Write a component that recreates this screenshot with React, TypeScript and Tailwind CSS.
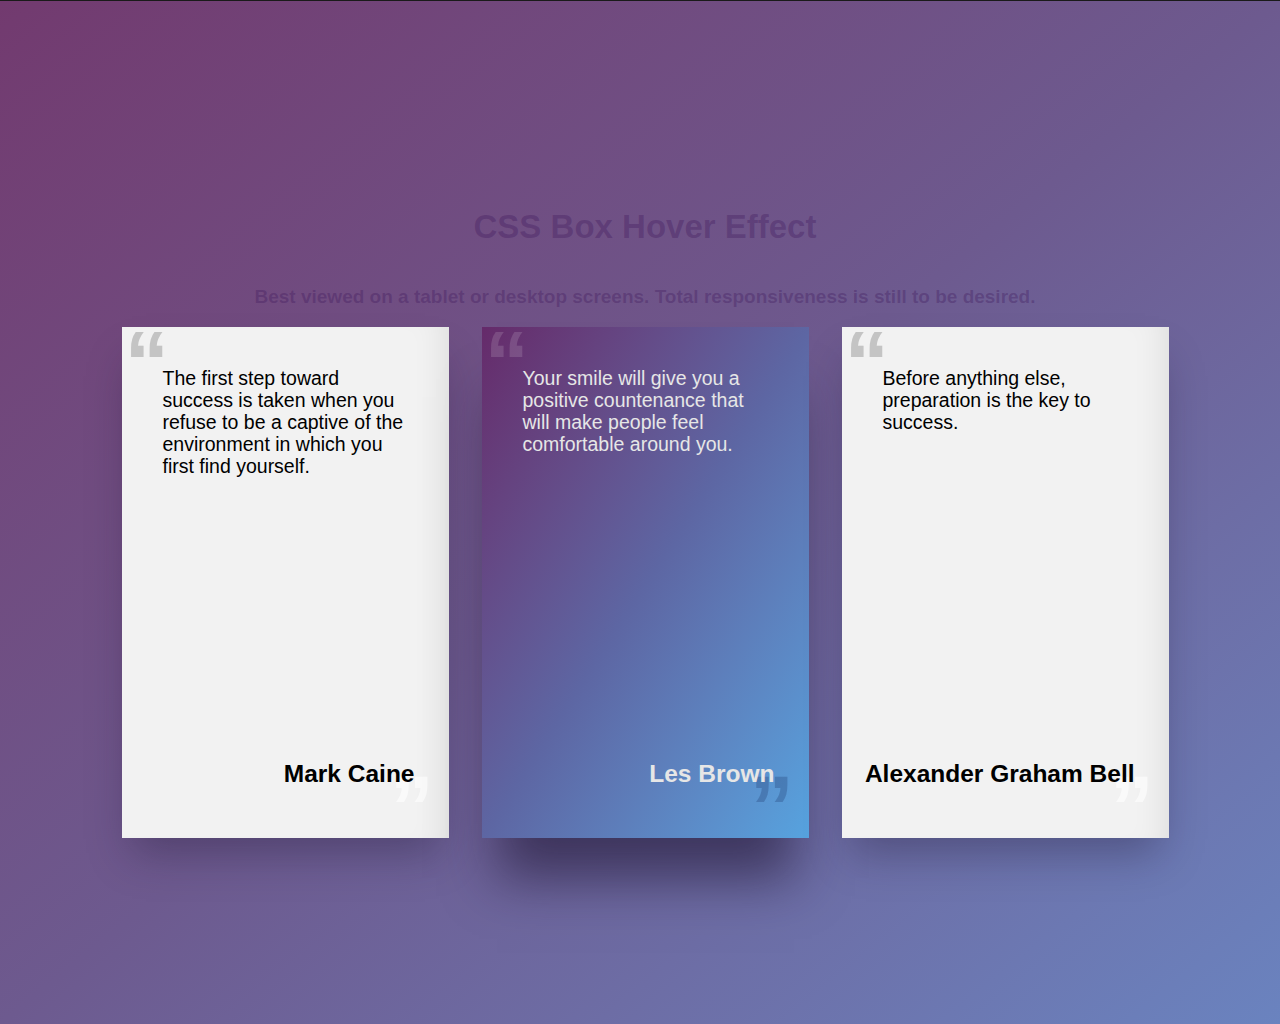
import React from "react";

type Q = { lines: string[]; author: string; featured?: boolean };

const quotes: Q[] = [
  {
    lines: [
      "The first step toward",
      "success is taken when you",
      "refuse to be a captive of the",
      "environment in which you",
      "first find yourself.",
    ],
    author: "Mark Caine",
  },
  {
    lines: [
      "Your smile will give you a",
      "positive countenance that",
      "will make people feel",
      "comfortable around you.",
    ],
    author: "Les Brown",
    featured: true,
  },
  {
    lines: ["Before anything else,", "preparation is the key to", "success."],
    author: "Alexander Graham Bell",
  },
];

function Card({ q }: { q: Q }) {
  const base =
    "relative w-[327px] h-[511px] flex flex-col justify-between overflow-hidden";
  const cls = q.featured
    ? `${base} bg-linear-to-br from-[#652a6a] via-[#5d66a3] to-[#56a3df] text-[#e6e6e6] shadow-[0_55px_50px_-15px_rgba(30,20,50,0.6)]`
    : `${base} bg-[#f2f2f2] text-black shadow-[0_25px_40px_-10px_rgba(30,20,50,0.35),inset_-30px_0_35px_-28px_rgba(0,0,0,0.1)]`;
  return (
    <div className={cls}>
      <span
        className={`absolute left-[3px] top-[-9px] text-[89px] leading-[89px] font-bold select-none ${
          q.featured ? "text-[rgba(255,255,255,0.14)]" : "text-[#c4c4c4]"
        }`}
      >
        {"\u201C"}
      </span>
      <span
        className={`absolute left-[268px] top-[436px] text-[89px] leading-[89px] font-bold select-none ${
          q.featured ? "text-[rgba(20,40,90,0.25)]" : "text-[rgba(255,255,255,0.6)]"
        }`}
      >
        {"\u201D"}
      </span>
      <p className="relative pl-[41px] pt-[40px] text-[19.5px] leading-[22px]">
        {q.lines.map((l) => (
          <span key={l} className="block whitespace-nowrap">
            {l}
          </span>
        ))}
      </p>
      <p className="relative text-right pr-[34px] pb-[50px] text-[24.5px] leading-[28px] font-bold">
        {q.author}
      </p>
    </div>
  );
}

export default function App() {
  return (
    <div
      className="min-h-[1024px] w-full border-t border-[#1a1a1a] bg-linear-to-br from-[#723a6f] via-[#6d5a8f] to-[#6a83bf] pl-[10px]"
      style={{ fontFamily: '"Liberation Sans", Arial, sans-serif' }}
    >
      <div className="flex flex-col items-center pt-[207px]">
        <h1 className="text-[33px] leading-[38px] font-bold text-[rgba(60,20,90,0.32)]">
          CSS Box Hover Effect
        </h1>
        <p className="mt-[40px] text-[19px] leading-[22px] font-bold text-[rgba(60,20,90,0.32)]">
          Best viewed on a tablet or desktop screens. Total responsiveness is still to be desired.
        </p>
        <div className="mt-[19px] flex gap-[33px]">
          {quotes.map((q) => (
            <Card key={q.author} q={q} />
          ))}
        </div>
      </div>
    </div>
  );
}
